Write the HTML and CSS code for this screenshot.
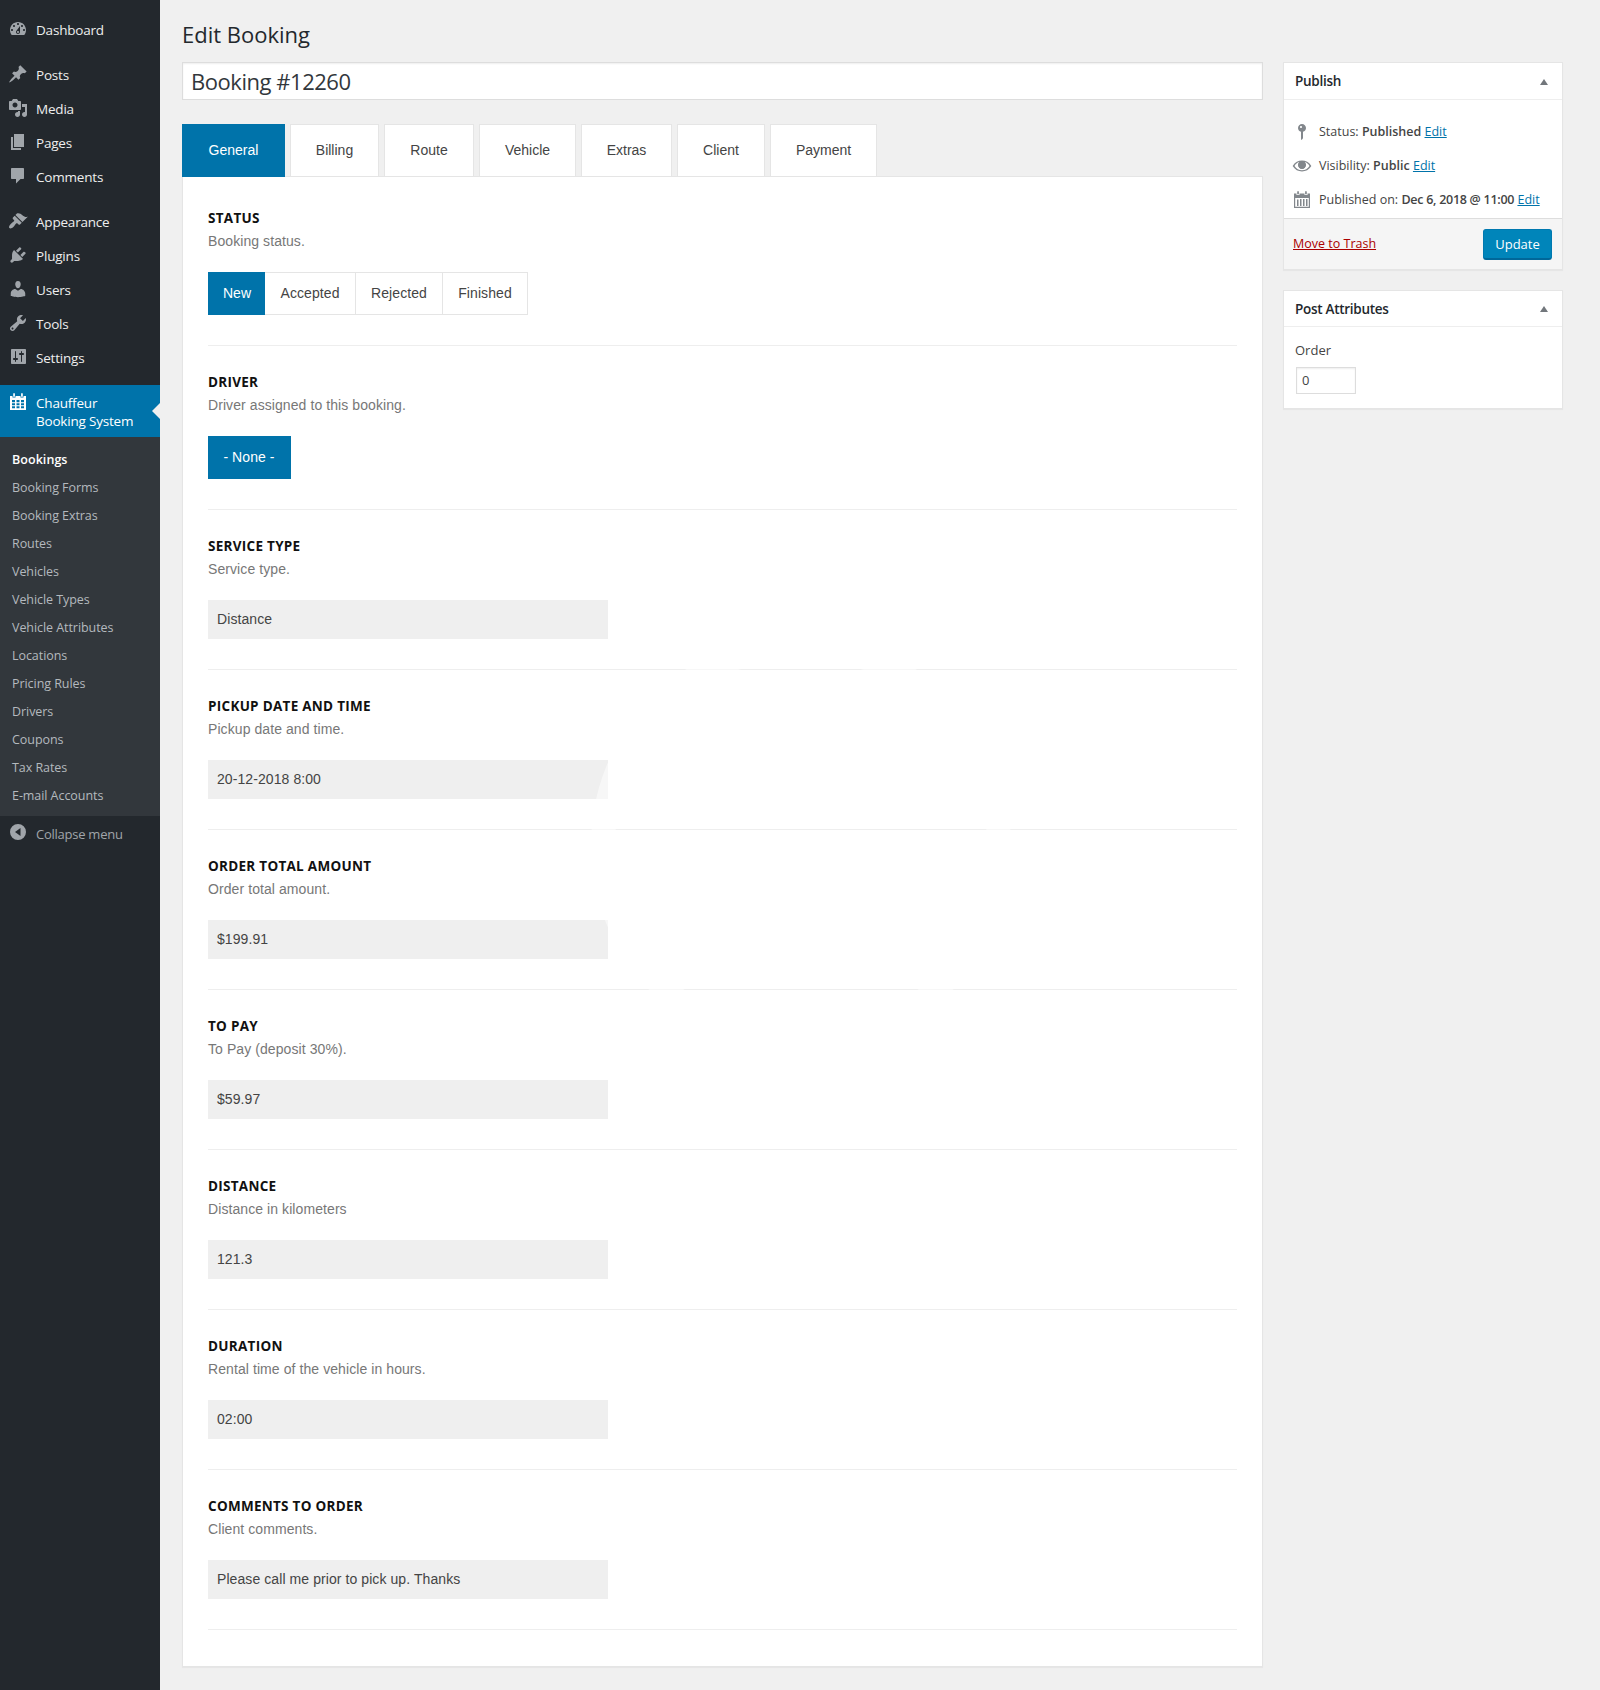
FILE: index.html
```html
<!DOCTYPE html>
<html lang="en">
<head>
<meta charset="utf-8">
<title>Edit Booking</title>
<link rel="stylesheet" href="styles.css">
</head>
<body>
<div class="layout">
  <nav class="sidebar">
    <ul class="menu">
      <li class="menu-item"><svg class="icon" viewBox="0 0 20 20"><path fill-rule="evenodd" d="M3.76 16h12.48c1.1-1.37 1.76-3.11 1.76-5 0-4.42-3.58-8-8-8s-8 3.58-8 8c0 1.89.66 3.63 1.76 5zM10 4c.55 0 1 .45 1 1s-.45 1-1 1-1-.45-1-1 .45-1 1-1zM6 6c.55 0 1 .45 1 1s-.45 1-1 1-1-.45-1-1 .45-1 1-1zm8 0c.55 0 1 .45 1 1s-.45 1-1 1-1-.45-1-1 .45-1 1-1zm-5.370 5.550L12 7v6c0 1.100-.9 2-2 2s-2-.9-2-2c0-.57.24-1.080.63-1.450zM4 10c.55 0 1 .45 1 1s-.45 1-1 1-1-.45-1-1 .45-1 1-1zm12 0c.55 0 1 .45 1 1s-.45 1-1 1-1-.45-1-1 .45-1 1-1zm-5 3c0-.55-.45-1-1-1s-1 .45-1 1 .45 1 1 1 1-.45 1-1z"/></svg><span>Dashboard</span></li>
    </ul>
    <ul class="menu">
      <li class="menu-item"><svg class="icon" viewBox="0 0 20 20"><path d="M10.440 3.020l1.820-1.820 6.360 6.350-1.830 1.820c-1.050-.68-2.480-.57-3.410.36l-.75.75c-.92.93-1.040 2.350-.35 3.410l-1.830 1.820-2.410-2.410-2.800 2.790c-.42.42-3.380 2.710-3.800 2.290s1.860-3.390 2.280-3.810l2.790-2.790L4.100 9.360l1.830-1.820c1.050.69 2.480.57 3.400-.36l.75-.75c.93-.92 1.050-2.350.36-3.410z"/></svg><span>Posts</span></li>
      <li class="menu-item"><svg class="icon" viewBox="0 0 20 20"><path fill-rule="evenodd" d="M13 11V4c0-.55-.45-1-1-1h-1.670L9 1H5L3.670 3H2c-.55 0-1 .45-1 1v7c0 .55.45 1 1 1h10c.55 0 1-.45 1-1zM7 4.500c1.380 0 2.500 1.120 2.500 2.500S8.380 9.500 7 9.500 4.500 8.380 4.500 7 5.620 4.500 7 4.500zM14 6h5v10.500c0 1.380-1.120 2.500-2.500 2.500S14 17.880 14 16.500s1.120-2.500 2.500-2.500c.17 0 .34.02.5.05V9h-3V6zm-4 8.050V13h2v3.500c0 1.380-1.120 2.500-2.500 2.500S7 17.880 7 16.500 8.120 14 9.500 14c.17 0 .34.02.5.05z"/></svg><span>Media</span></li>
      <li class="menu-item"><svg class="icon" viewBox="0 0 20 20"><path d="M6 15V2h10v13H6zm-1 1h8v2H3V5h2v11z"/></svg><span>Pages</span></li>
      <li class="menu-item"><svg class="icon" viewBox="0 0 20 20"><path d="M4 2h11c.6 0 1 .4 1 1v9c0 .6-.4 1-1 1h-2.500l-4.500 4.500V13H4c-.6 0-1-.4-1-1V3c0-.6.4-1 1-1z"/></svg><span>Comments</span></li>
    </ul>
    <ul class="menu">
      <li class="menu-item"><svg class="icon" viewBox="0 0 20 20"><path d="M14.480 11.060L7.410 3.990l1.500-1.500c.5-.56 2.300-.47 3.510.32 1.210.8 1.430 1.280 2.910 2.100 1.180.64 2.450 1.260 4.450.85zm-.71.71L6.700 4.700 4.930 6.470c-.39.39-.39 1.020 0 1.410l1.060 1.060c.39.39.39 1.030 0 1.420-.6.6-1.430 1.110-2.210 1.690-.35.26-.7.53-1.010.84C1.430 14.230.4 16.080 1.400 17.070c.99 1 2.840-.03 4.180-1.360.31-.31.58-.66.85-1.020.57-.78 1.080-1.610 1.690-2.210.39-.39 1.020-.39 1.410 0l1.060 1.060c.39.39 1.020.39 1.410 0z"/></svg><span>Appearance</span></li>
      <li class="menu-item"><svg class="icon" viewBox="0 0 20 20"><path d="M13.110 4.360L9.870 7.600 8 5.730l3.240-3.240c.35-.34 1.050-.2 1.560.32.52.51.66 1.210.31 1.550zm-8 1.770l.91-1.120 9.010 9.010-1.190.84c-.71.71-2.630 1.160-3.820 1.160H6.140L4.900 17.260c-.59.59-1.540.59-2.120 0-.59-.58-.59-1.530 0-2.120l1.240-1.240v-3.880c0-1.130.4-3.190 1.090-3.890zm7.260 3.970l3.240-3.240c.34-.35 1.040-.21 1.550.31.52.51.66 1.210.31 1.550l-3.240 3.250z"/></svg><span>Plugins</span></li>
      <li class="menu-item"><svg class="icon" viewBox="0 0 20 20"><path d="M10 9.250c-2.270 0-2.730-3.440-2.730-3.440C7 4.020 7.820 2 9.970 2c2.160 0 2.980 2.020 2.710 3.810 0 0-.41 3.440-2.680 3.440zm0 2.570L12.720 10c2.390 0 4.520 2.330 4.520 4.530v2.490s-3.650 1.130-7.240 1.130c-3.650 0-7.240-1.130-7.240-1.130v-2.490c0-2.250 1.940-4.480 4.470-4.480z"/></svg><span>Users</span></li>
      <li class="menu-item"><svg class="icon" viewBox="0 0 20 20"><path fill-rule="evenodd" d="M16.680 9.770c-1.340 1.340-3.300 1.670-4.950.99l-5.410 6.520c-.99.99-2.590.99-3.580 0s-.99-2.590 0-3.570l6.520-5.420c-.68-1.650-.35-3.610.99-4.950 1.280-1.280 3.120-1.620 4.720-1.060l-2.890 2.890 2.820 2.820 2.860-2.870c.53 1.580.18 3.390-1.080 4.650zM3.810 16.210c.4.39 1.040.39 1.430 0 .4-.4.4-1.040 0-1.430-.39-.4-1.030-.4-1.430 0-.39.39-.39 1.030 0 1.430z"/></svg><span>Tools</span></li>
      <li class="menu-item"><svg class="icon" viewBox="0 0 20 20"><path fill-rule="evenodd" d="M18 16V3c0-.55-.45-1-1-1H4c-.55 0-1 .45-1 1v13c0 .55.45 1 1 1h13c.55 0 1-.45 1-1zM8 11h1c.55 0 1 .45 1 1s-.45 1-1 1H8v1.500c0 .28-.22.5-.5.5s-.5-.22-.5-.5V13H6c-.55 0-1-.45-1-1s.45-1 1-1h1V4.500c0-.28.22-.5.5-.5s.5.22.5.5V11zm5-3h-1c-.55 0-1-.45-1-1s.45-1 1-1h1V4.500c0-.28.22-.5.5-.5s.5.22.5.5V6h1c.55 0 1 .45 1 1s-.45 1-1 1h-1v6.500c0 .28-.22.5-.5.5s-.5-.22-.5-.5V8z"/></svg><span>Settings</span></li>
    </ul>
    <div class="menu-item menu-current"><svg class="icon" viewBox="0 0 20 20"><path fill-rule="evenodd" d="M2 5h2.500v1.500h3V5h5v1.500h3V5H18v14H2zM4 9h3v2.200H4zM8.500 9h3v2.200h-3zM13 9h3v2.200h-3zM4 12.200h3v2H4zM8.500 12.200h3v2h-3zM13 12.200h3v2h-3zM4 15.200h3v2H4zM8.500 15.200h3v2h-3zM13 15.200h3v2h-3z"/><path d="M5.200 3c0-1.300 1.700-1.300 1.700 0v2.800H5.200zM13.100 3c0-1.300 1.700-1.300 1.700 0v2.800h-1.700z"/></svg><span>Chauffeur<br>Booking System</span></div>
    <ul class="submenu">
      <li class="active">Bookings</li><li>Booking Forms</li><li>Booking Extras</li><li>Routes</li><li>Vehicles</li><li>Vehicle Types</li><li>Vehicle Attributes</li><li>Locations</li><li>Pricing Rules</li><li>Drivers</li><li>Coupons</li><li>Tax Rates</li><li>E-mail Accounts</li>
    </ul>
    <div class="menu-item collapse"><svg class="icon" viewBox="0 0 20 20"><path fill-rule="evenodd" d="M10 2a8 8 0 1 1 0 16 8 8 0 0 1 0-16zM12.500 6L7 10l5.500 4z"/></svg><span>Collapse menu</span></div>
  </nav>

  <main class="main">
    <h1 class="page-title">Edit Booking</h1>
    <div class="columns">
      <div class="content">
        <div class="title-field">Booking #12260</div>
        <div class="tabs">
          <div class="tab tab-active">General</div><div class="tab">Billing</div><div class="tab">Route</div><div class="tab">Vehicle</div><div class="tab">Extras</div><div class="tab">Client</div><div class="tab">Payment</div>
        </div>
        <div class="panel">
          <section class="row"><h2>Status</h2><p>Booking status.</p>
            <div class="choices"><div class="choice selected w-new">New</div><div class="choice w-accepted">Accepted</div><div class="choice w-rejected">Rejected</div><div class="choice w-finished">Finished</div></div></section>
          <section class="row"><h2>Driver</h2><p>Driver assigned to this booking.</p>
            <div class="choices"><div class="choice selected w-none">- None -</div></div></section>
          <section class="row"><h2>Service type</h2><p>Service type.</p><div class="value">Distance</div></section>
          <section class="row"><h2>Pickup date and time</h2><p>Pickup date and time.</p><div class="value">20-12-2018 8:00</div></section>
          <section class="row"><h2>Order total amount</h2><p>Order total amount.</p><div class="value">$199.91</div></section>
          <section class="row"><h2>To pay</h2><p>To Pay (deposit 30%).</p><div class="value">$59.97</div></section>
          <section class="row"><h2>Distance</h2><p>Distance in kilometers</p><div class="value">121.3</div></section>
          <section class="row"><h2>Duration</h2><p>Rental time of the vehicle in hours.</p><div class="value">02:00</div></section>
          <section class="row"><h2>Comments to order</h2><p>Client comments.</p><div class="value">Please call me prior to pick up. Thanks</div></section>
        </div>
      </div>

      <aside class="side">
        <div class="box">
          <div class="box-head head-publish"><span>Publish</span><svg class="toggle" viewBox="0 0 8 6"><path d="M4 0l4 6H0z"/></svg></div>
          <div class="publish-rows">
            <div class="meta"><svg class="icon" viewBox="0 0 20 20"><path fill-rule="evenodd" d="M14 6c0 1.860-1.280 3.410-3 3.860V16c0 1-2 2-2 2V9.860c-1.720-.45-3-2-3-3.860 0-2.210 1.790-4 4-4s4 1.790 4 4zM8 5c0 .55.45 1 1 1s1-.45 1-1-.45-1-1-1-1 .45-1 1z"/></svg><span>Status: <b>Published</b> <a>Edit</a></span></div>
            <div class="meta"><svg class="icon" viewBox="0 0 20 20"><path fill-rule="evenodd" d="M19 9.400C17 6.200 13.800 4.500 10 4.500S3 6.200 1 9.400l-.3.600.3.600c2 3.200 5.200 4.900 9 4.900s7-1.700 9-4.900l.3-.600zM10 14.200c-3.100 0-5.800-1.400-7.500-4.200C3.600 8 5.300 6.700 7.300 6.100 6.500 6.900 6 7.900 6 9.100c0 2.200 1.800 4 4 4s4-1.800 4-4c0-1.200-.5-2.200-1.300-3 2 .6 3.700 1.900 4.800 3.900-1.700 2.800-4.400 4.200-7.500 4.200z"/><path fill-rule="evenodd" d="M10 5.500a3.600 3.600 0 1 1 0 7.200 3.600 3.600 0 0 1 0-7.200zM8.800 6.600a1.300 1.300 0 1 0 0 2.600 1.300 1.300 0 0 0 0-2.600z"/></svg><span>Visibility: <b>Public</b> <a>Edit</a></span></div>
            <div class="meta"><svg class="icon" viewBox="0 0 20 20"><path fill-rule="evenodd" d="M2 3.500h2.500V5h3V3.500h5V5h3V3.500H18V18H2zM3.200 8v8.800h13.600V8z"/><path d="M5.200 2c0-1.300 1.700-1.300 1.700 0v2.300H5.200zM13.100 2c0-1.300 1.700-1.300 1.700 0v2.300h-1.700zM5 9.500h1.500V16H5zM8 9h1.500v7H8zM11 9h1.500v7H11zM14 9h1.500v7H14z"/></svg><span class="published-on">Published on: <b>Dec 6, 2018 @ 11:00</b> <a>Edit</a></span></div>
          </div>
          <div class="publish-foot"><a class="trash">Move to Trash</a><button class="update">Update</button></div>
        </div>
        <div class="box">
          <div class="box-head"><span>Post Attributes</span><svg class="toggle" viewBox="0 0 8 6"><path d="M4 0l4 6H0z"/></svg></div>
          <div class="attributes"><label>Order</label><div class="order-field">0</div></div>
        </div>
      </aside>
    </div>
  </main>
</div>
<div class="watermark"></div>
</body>
</html>
```
FILE: styles.css
```css
* { box-sizing: border-box; }
body {
  margin: 0;
  background: #f0f0f0;
  color: #444;
  font: 13px/20px "Open Sans", "Noto Sans", sans-serif;
}
ul, h1, h2, p { margin: 0; padding: 0; list-style: none; }
.layout { display: flex; height: 1690px; overflow: hidden; }

/* Admin menu */
.sidebar { width: 160px; flex: none; background: #23282d; padding-top: 13px; }
.menu { margin-bottom: 11px; }
.menu + .menu + .menu { margin-bottom: 10px; }
.menu-item {
  display: flex;
  height: 34px;
  padding: 6px 0 0 8px;
  gap: 8px;
  color: #eee;
  font-size: 13.5px;
  line-height: 22px;
  letter-spacing: -0.2px;
  white-space: nowrap;
}
.icon { width: 20px; height: 20px; flex: none; fill: #a0a5aa; }
.menu-current {
  height: 52px;
  background: #0073aa;
  color: #fff;
  line-height: 18px;
  position: relative;
}
.menu-current span { padding-top: 3px; }
.menu-current .icon { fill: #fff; }
.menu-current::after {
  content: "";
  position: absolute;
  right: 0;
  top: 18px;
  border: 8px solid transparent;
  border-left: 0;
  border-right-color: #f0f0f0;
}
.submenu { background: #32373c; height: 379px; padding: 9px 0 6px 12px; }
.submenu li { height: 28px; line-height: 28px; font-size: 12.5px; letter-spacing: -0.06px; color: #b4b9be; }
.submenu .active { color: #fff; font-weight: 600; letter-spacing: 0.05px; }
.collapse { color: #a0a5aa; font-size: 13px; letter-spacing: -0.25px; }
.collapse span { padding-top: 1px; }

/* Main column */
.main { flex: none; width: 1440px; padding: 20px 37px 0 22px; }
.page-title {
  height: 42px;
  font-size: 22px;
  font-weight: 400;
  line-height: 28px;
  color: #23282d;
}
.columns { display: flex; gap: 20px; }
.content { width: 1081px; flex: none; }
.title-field {
  height: 38px;
  padding: 0 8px;
  border: 1px solid #ddd;
  background: #fff;
  box-shadow: inset 0 1px 2px rgba(0, 0, 0, .07);
  font-size: 22px;
  letter-spacing: -0.46px;
  line-height: 36px;
  color: #32373c;
}
.tabs {
  display: flex;
  gap: 5px;
  margin-top: 24px;
  font: 14px/50px "Liberation Sans", Arial, sans-serif;
}
.tab {
  height: 52px;
  border: 1px solid #e5e5e5;
  border-bottom: 0;
  background: #fff;
  text-align: center;
  width: 89px;
}
.tab:nth-child(3) { width: 90px; }
.tab:nth-child(4) { width: 97px; }
.tab:nth-child(5) { width: 91px; }
.tab:nth-child(6) { width: 88px; }
.tab:nth-child(7) { width: 107px; }
.tab-active { width: 103px; height: 53px; margin-bottom: -1px; background: #0073aa; border-color: #0073aa; color: #fff; position: relative; }
.panel {
  height: 1491px;
  padding: 5px 25px 0;
  border: 1px solid #e5e5e5;
  background: #fff;
  box-shadow: 0 1px 1px rgba(0, 0, 0, .04);
  font: 14px/20px "Liberation Sans", Arial, sans-serif;
  letter-spacing: 0.08px;
}
.row { padding: 26px 0 30px; border-bottom: 1px solid #eee; }
.row h2 {
  font: 700 13.5px/20px "Open Sans", sans-serif;
  letter-spacing: 0.28px;
  color: #111;
  text-transform: uppercase;
}
.row p { margin: 3px 0 21px; color: #777; }
.value { width: 400px; height: 39px; padding-left: 9px; background: #efefef; line-height: 38px; color: #444; }
.choices { display: flex; }
.choice { height: 43px; border: 1px solid #e5e5e5; border-left: 0; text-align: center; line-height: 41px; }
.selected { background: #0073aa; border-color: #0073aa; color: #fff; }
.w-new { width: 57px; padding-left: 2px; }
.w-accepted { width: 91px; }
.w-rejected { width: 87px; }
.w-finished { width: 85px; }
.w-none { width: 83px; }

/* Meta boxes */
.side { width: 280px; flex: none; display: flex; flex-direction: column; gap: 20px; }
.box { border: 1px solid #e5e5e5; background: #fff; box-shadow: 0 1px 1px rgba(0, 0, 0, .04); }
.box-head {
  display: flex;
  justify-content: space-between;
  align-items: center;
  height: 36px;
  padding: 0 14px 0 11px;
  border-bottom: 1px solid #eee;
  color: #23282d;
  font-size: 13.5px;
  font-weight: 600;
  letter-spacing: -0.28px;
}
.head-publish { height: 37px; }
.toggle { width: 8px; height: 6px; fill: #72777c; margin-top: 1px; }
.publish-rows { height: 118px; padding-top: 15px; }
.meta { display: flex; gap: 7px; height: 34px; padding: 7px 0 0 8px; white-space: nowrap; font-size: 12.5px; }
.meta .icon { fill: #82878c; }
.meta b { font-weight: 600; }
.meta a { color: #0073aa; text-decoration: underline; }
.published-on b { letter-spacing: -0.27px; }
.publish-foot {
  display: flex;
  justify-content: space-between;
  height: 51px;
  padding: 10px 10px 0 9px;
  border-top: 1px solid #ddd;
  background: #f5f5f5;
}
.trash { color: #a00; text-decoration: underline; line-height: 30px; font-size: 12.5px; }
.update {
  width: 69px;
  height: 31px;
  padding: 0;
  border: 1px solid #0079b0;
  border-bottom: 2px solid #006799;
  border-radius: 3px;
  background: #0085ba;
  color: #fff;
  font: 13px/28px "Open Sans", sans-serif;
}
.attributes { height: 81px; padding: 13px 12px 0 11px; }
.attributes label { display: block; }
.order-field {
  width: 60px;
  height: 27px;
  margin: 7px 0 0 1px;
  padding-left: 5px;
  border: 1px solid #ddd;
  box-shadow: inset 0 1px 2px rgba(0, 0, 0, .07);
  line-height: 25px;
}

/* Faint ring laid over the page */
.watermark {
  position: absolute;
  left: 591px;
  top: 635px;
  width: 420px;
  height: 420px;
  border: 24px solid rgba(255, 255, 255, .5);
  border-radius: 50%;
  pointer-events: none;
}
```
